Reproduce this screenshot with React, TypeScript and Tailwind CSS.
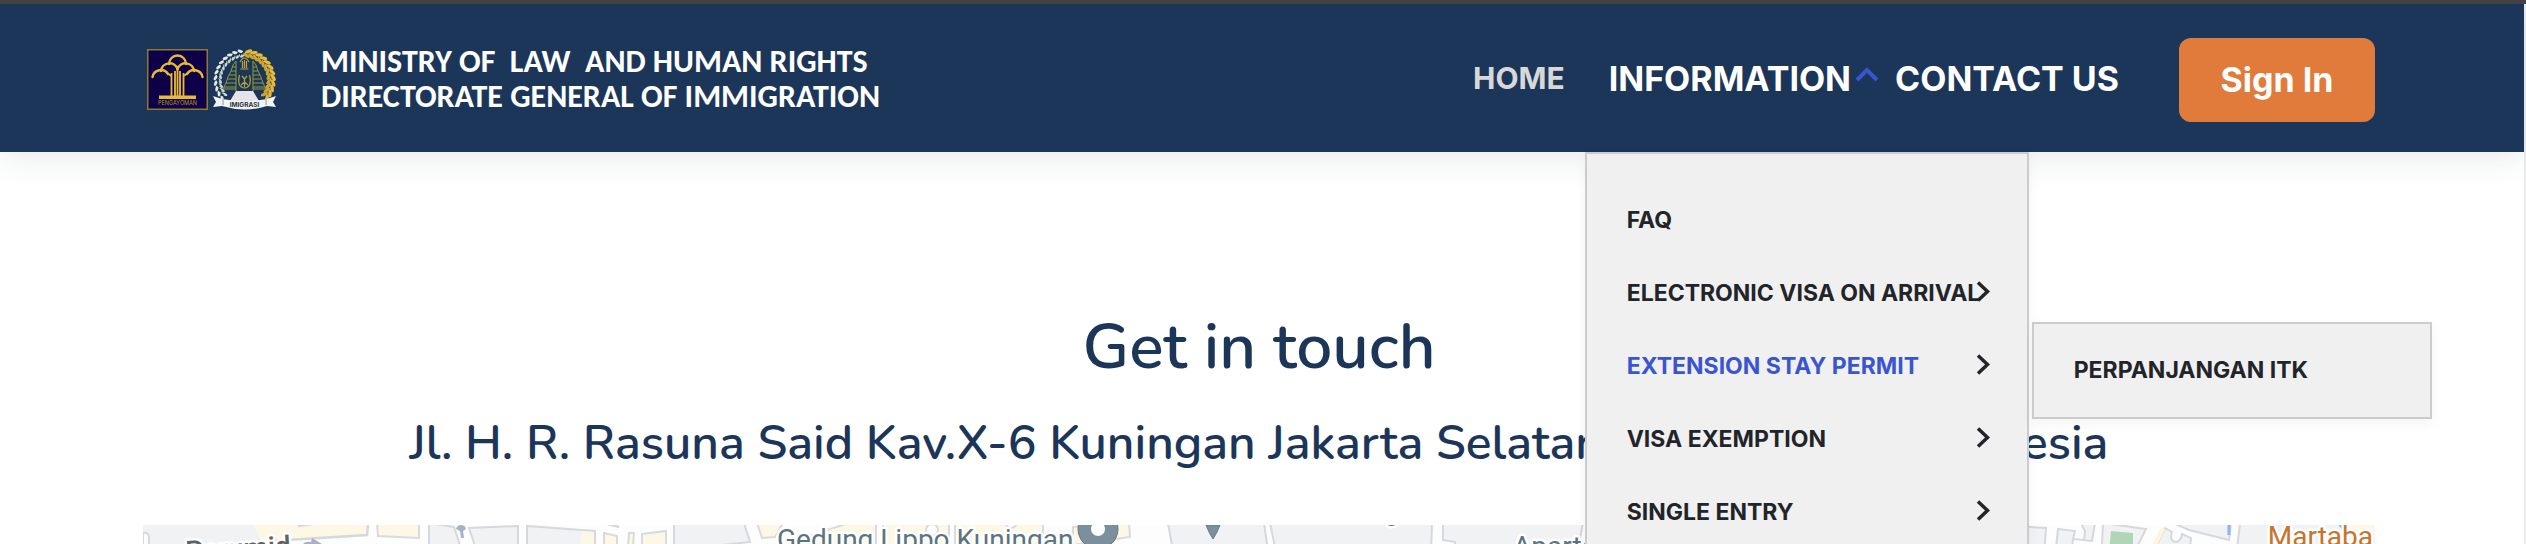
const MENU = [
  { label: "FAQ" },
  { label: "ELECTRONIC VISA ON ARRIVAL", children: ["E-VOA"] },
  { label: "EXTENSION STAY PERMIT", children: ["PERPANJANGAN ITK"], open: true },
  { label: "VISA EXEMPTION", children: ["VISA EXEMPTION"] },
  { label: "SINGLE ENTRY", children: ["SINGLE ENTRY"] },
];

function MinistryEmblem() {
  return (
    <svg viewBox="0 0 61 61" className="size-[61px]" role="img" aria-label="Ministry emblem">
      <rect x="0.75" y="0.75" width="59.5" height="59.5" fill="#0d0048" stroke="#8d7934" strokeWidth="1.5" />
      <g fill="none" stroke="#e9bb35" strokeWidth="2.4" strokeLinecap="round">
        <path d="M22 15 A8.5 8.5 0 0 1 39 15" />
        <path d="M14 22 A8.5 8.5 0 0 1 30.5 20" />
        <path d="M30.5 20 A8.5 8.5 0 0 1 47 22" />
        <path d="M5.5 28 A8.5 8.5 0 0 1 21 25" />
        <path d="M40 25 A8.5 8.5 0 0 1 55.5 28" />
      </g>
      <g stroke="#e9bb35" strokeWidth="1.8">
        <path d="M24.5 24V48M28 22V48M30.5 20V48M33 22V48M36.5 24V48" />
        <path d="M20 24l4.5 3M41 24l-4.5 3" />
      </g>
      <path d="M12 46.5h37v3.5H12z" fill="#e9bb35" />
      <text x="30.5" y="55.5" textAnchor="middle" fontSize="5.5" fontFamily="Inter, sans-serif" fill="#b8932f">
        PENGAYOMAN
      </text>
    </svg>
  );
}

const LEAVES = Array.from({ length: 12 }, (_, i) => 9 + i * 11);

function ImmigrationEmblem() {
  return (
    <svg viewBox="0 0 65 61" className="h-[61px] w-[65px]" role="img" aria-label="Immigration emblem">
      <g stroke="#8f9a35" strokeWidth="1" fill="none">
        <path d="M24 12V42M41 12V42M24 12l-3 4-2 6-3 6-2 6-3 6h13M41 12l3 4 2 6 3 6 2 6 3 6H41" />
        <path d="M20 18h4M19 22h5M17 26h7M16 30h8M14 34h10M12 38h12M41 18h4M41 22h5M41 26h7M41 30h8M41 34h10M41 38h12" />
      </g>
      {LEAVES.map((a) => (
        <g key={a}>
          <g transform={`rotate(${-a} 32.5 31) translate(32.5 3)`}>
            <ellipse cx="0" cy="-1" rx="3" ry="1.5" transform="rotate(28)" fill="#e3e9ea" />
            <ellipse cx="0" cy="4" rx="3" ry="1.4" transform="rotate(-28)" fill="#cbd5d6" />
            <circle cx="2.8" cy="1.5" r="1.4" fill="#16382f" />
          </g>
          <g transform={`rotate(${a} 32.5 31) translate(32.5 3)`}>
            <ellipse cx="0" cy="-1" rx="3.8" ry="1.7" transform="rotate(-28)" fill="#e6ba3c" />
            <ellipse cx="0" cy="4" rx="3.8" ry="1.6" transform="rotate(28)" fill="#cfa531" />
          </g>
        </g>
      ))}
      <g stroke="#b9a535" strokeWidth="1.2" fill="none">
        <path d="M32.5 11v8M30.5 12v7M34.5 12v7M28 13q4.5-8 9 0M28.5 20h8" />
        <path d="M27.5 26q-1.5 6 0 10 2 3 5 3t5-3q1.5-4 0-10M30 27l2.5 3 2.5-3M32.5 30v8M29 36l3.5-3 3.5 3" />
      </g>
      <path d="M24 42h17l6 10H18z" fill="#e2e4e8" />
      <path d="M1 47l9 3q22 4 45 0l9-3-3 6 3 5-9-1q-22 7-45 0l-9 1 3-5z" fill="#f2f4f6" />
      <path d="M11 50v6M54 50v6" stroke="#8b96a5" />
      <text x="32.5" y="58" textAnchor="middle" fontSize="6.5" fontWeight="700" fontFamily="Inter, sans-serif" fill="#2b3138">
        IMIGRASI
      </text>
    </svg>
  );
}

function ChevronRight() {
  return (
    <svg viewBox="0 0 14 24" className="absolute right-[37px] top-6 h-6 w-[14px]" fill="none" stroke="#212529" strokeWidth="3.5" aria-hidden="true">
      <path d="M2 1.5 L11.5 10.500 L2 19.5" />
    </svg>
  );
}

function Menu() {
  return (
    <ul className="absolute -left-6 top-full z-10 w-[444px] border-2 border-[#cbcccd] bg-[#f0f0f0] pb-7 pt-[30px] text-[23px] font-bold leading-[35px] text-[#212529] shadow-[0_4px_12px_rgba(0,0,0,0.05)]">
      {MENU.map((item) => (
        <li key={item.label} className="relative">
          <a href="#" className={`block whitespace-nowrap px-10 py-[19px] ${item.open ? "text-[#3a55d1]" : ""}`}>
            {item.label}
          </a>
          {item.children && <ChevronRight />}
          {item.open && (
            <ul className="absolute -top-2 left-full ml-[5px] w-[400px] border-2 border-[#cbcccd] bg-[#f0f0f0] py-[10px] shadow-[0_4px_12px_rgba(0,0,0,0.05)]">
              {item.children?.map((child) => (
                <li key={child}>
                  <a href="#" className="block whitespace-nowrap px-10 py-[19px]">{child}</a>
                </li>
              ))}
            </ul>
          )}
        </li>
      ))}
    </ul>
  );
}

function StreetMap() {
  const label = { fontFamily: "Roboto, sans-serif", fontSize: 28, stroke: "#ffffff", strokeWidth: 5, strokeLinejoin: "round" as const, paintOrder: "stroke" };
  return (
    <svg viewBox="0 0 2232 60" width="2232" height="60" className="font-normal" role="img" aria-label="Map of Kuningan, Jakarta">
      <rect width="2232" height="60" fill="#fdfdfe" />
      <path d="M0 0H112L118 16 100 22 0 60z" fill="#f0f2f4" />
      <g fill="#f0f2f4" stroke="#d6d8de" strokeWidth="2">
        <path d="M286-2L311 2 330 60H286zM326 3L375 1V60H345zM384 1L452 6V60H384zM531-2H601L607 17 570 21 531 22z" />
        <path d="M1025-2H1121L1130 60H1036zM1127-2H1289L1287 60H1140zM1300-2H1440L1428 60H1312V17L1300 15z" />
        <path d="M1870 1L1903 3 1899 60H1870zM1915 4L1932 6 1930 14 1949 16 1952-2H1938L1942 6 1941 15 1930 14 1926 60H1909zM1960-2L2003 4 1975 60H1957z" />
        <path d="M2022 3L2029 7Q2026 16 2033 17 2038 16 2039 9L2048 13 2044 60H1995zM2030-2H2088L2086 15 2046 5zM2097-2H2234V60H2090z" />
      </g>
      <path d="M0 8Q6 7 6 13V60H0z" fill="#fdfdfe" stroke="#d6d8de" strokeWidth="2" />
      <g fill="#fdf8e6" stroke="#d9dadd" strokeWidth="2">
        <path d="M234-2H276V13L235 11zM461 8L474 11V60H461zM486 8H491L487 60H482zM499 9L523 6V60H499zM614-2H640L632 12 619 13z" />
        <path d="M656 14L706-2H733V60H650zM740-2H806V60H740zM812-2H900V60H812zM930 2L986-2 987 12 930 20z" />
      </g>
      <path d="M110 0H225V10L119 16z" fill="#fdf8e6" />
      <path d="M225 0L224 10 128 16M155 1L170-1M465-1L476 2" fill="none" stroke="#d6d8de" strokeWidth="2.5" />
      <path d="M439 6L451 7V60H432z" fill="#fdf8e6" />
      <circle cx="789" cy="5" r="6" fill="#fdfdfe" stroke="#d9dadd" strokeWidth="2" />
      <path d="M862-1Q868 7 874-1" fill="#fdfdfe" stroke="#d9dadd" strokeWidth="2" />
      <g fill="#abb0ca">
        <path d="M313 4Q314 0 318 0T323 4L320 6 321 13H318L317 6z" />
        <path d="M160 19Q162 16 168 17L169 13 179 19z" />
      </g>
      <path d="M1968 6L1990 8 1990 60H1963z" fill="#b1d6b7" />
      <path d="M2018 2L2022 4 1996 60H1990z" fill="#fdf5dc" />
      <path d="M2203 0H2232V8H2208z" fill="#fdf8e6" />
      <path d="M2086 0V10M2197 0L2202 5" stroke="#8db2f5" strokeWidth="3" />
      <path d="M1063 0H1077Q1074 8 1070 14 1066 8 1063 0z" fill="#7b8f9c" stroke="#647a88" />
      <text x="43" y="36" transform="rotate(-3 43 36)" {...label} fill="#5d6267" className="font-medium">Perumid</text>
      <text x="634" y="24" {...label} fill="#5b7480">Gedung Lippo Kuningan</text>
      <circle cx="955" cy="4" r="20" fill="#7b8f9c" stroke="#647a88" />
      <circle cx="955" cy="4" r="7" fill="#ffffff" />
      <text x="1241" y="-5" {...label} fill="#5b7480">g</text>
      <text x="1370" y="31" {...label} fill="#5b7480">Apartemen</text>
      <text x="2230" y="21" textAnchor="end" {...label} fill="#c8722b">Martaba</text>
    </svg>
  );
}

export default function App() {
  return (
    <div className="flex h-screen flex-col overflow-hidden border-t-4 border-[#434343] bg-white font-['Inter',sans-serif]">
      <div className="flex min-h-0 grow flex-col border-r-2 border-[#ececec]">
        <header className="relative z-10 flex h-[148px] shrink-0 items-center justify-between bg-[#1c365a] pl-[147px] pr-[149px] shadow-[0_6px_30px_rgba(30,60,60,0.1)]">
          <a href="#" className="flex items-center pt-0.5 text-white">
            <MinistryEmblem />
            <span className="ml-1"><ImmigrationEmblem /></span>
            <span className="ml-11 whitespace-pre font-['Carlito','Lato',sans-serif] text-[32px] font-bold leading-[35px]">
              {"MINISTRY OF  LAW  AND HUMAN RIGHTS\nDIRECTORATE GENERAL OF IMMIGRATION"}
            </span>
          </a>
          <nav className="flex h-full items-center text-[34px] font-bold text-white">
            <ul className="flex h-full">
              <li className="flex items-center">
                <a href="#" className="text-[30px] text-[#d8d8d8]">HOME</a>
              </li>
              <li className="relative ml-11 flex items-center">
                <button type="button" aria-expanded="true" className="flex items-center gap-1">
                  INFORMATION
                  <svg viewBox="0 0 24 22" className="h-[22px] w-6" fill="none" stroke="#3a55d1" strokeWidth="4" aria-hidden="true">
                    <path d="M2 13 L12 3 L22 13" />
                  </svg>
                </button>
                <Menu />
              </li>
              <li className="ml-4 flex items-center">
                <a href="#">CONTACT US</a>
              </li>
            </ul>
            <button type="button" className="ml-[60px] mt-1 h-[84px] w-[196px] rounded-xl bg-[#e07b3c] leading-none">Sign In</button>
          </nav>
        </header>
        <main className="flex min-h-0 grow flex-col pl-[143px] pr-[149px] pt-[157px] text-center font-['Nunito',sans-serif] font-semibold text-[#1c365a]">
          <h1 className="text-[64px] leading-[76px]">Get in touch</h1>
          <p className="mt-7 whitespace-nowrap text-5xl leading-[60px]">
            Jl. H. R. Rasuna Said Kav.X-6 Kuningan Jakarta Selatan, DKI Jakarta, Indonesia
          </p>
          <div className="mt-[52px] min-h-0 grow overflow-hidden">
            <StreetMap />
          </div>
        </main>
      </div>
    </div>
  );
}
